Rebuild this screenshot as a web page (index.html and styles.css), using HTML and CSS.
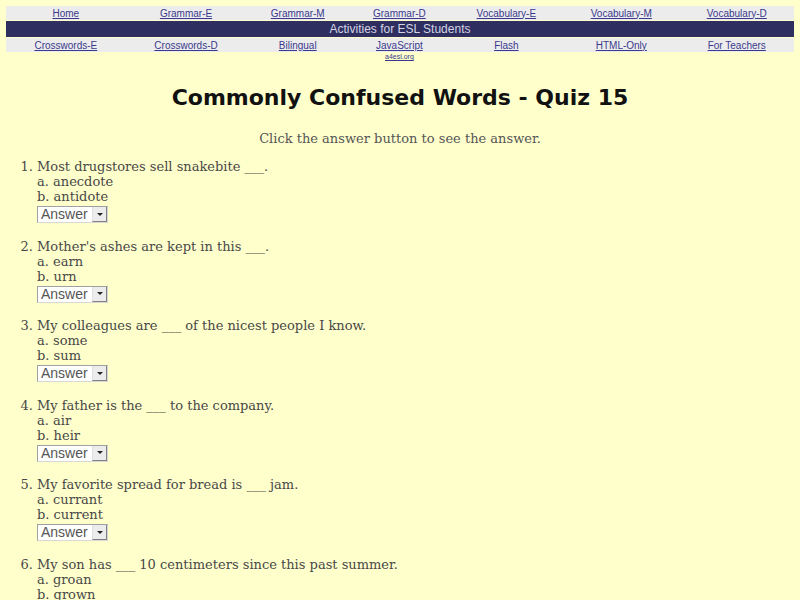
FILE: index.html
```html
<!DOCTYPE html>
<html>
<head>
<meta charset="utf-8">
<title>Commonly Confused Words - Quiz 15</title>
<link rel="stylesheet" href="styles.css">
</head>
<body>
<table class="nav">
  <tr class="links">
    <td><a href="#">Home</a></td>
    <td><a href="#">Grammar-E</a></td>
    <td><a href="#">Grammar-M</a></td>
    <td><a href="#">Grammar-D</a></td>
    <td><a href="#">Vocabulary-E</a></td>
    <td><a href="#">Vocabulary-M</a></td>
    <td><a href="#">Vocabulary-D</a></td>
  </tr>
  <tr class="banner">
    <td colspan="7">Activities for ESL Students</td>
  </tr>
  <tr class="links">
    <td><a href="#">Crosswords-E</a></td>
    <td><a href="#">Crosswords-D</a></td>
    <td><a href="#">Bilingual</a></td>
    <td><a href="#">JavaScript</a></td>
    <td><a href="#">Flash</a></td>
    <td><a href="#">HTML-Only</a></td>
    <td><a href="#">For Teachers</a></td>
  </tr>
  <tr class="site">
    <td></td><td></td><td></td>
    <td><a href="#">a4esl.org</a></td>
    <td></td><td></td><td></td>
  </tr>
</table>

<h1 class="title">Commonly Confused Words - Quiz 15</h1>
<p class="intro">Click the answer button to see the answer.</p>

<ol class="quiz">
  <li>
    <div>Most drugstores sell snakebite ___.</div>
    <div>a. anecdote</div>
    <div>b. antidote</div>
    <div class="select"><span class="value">Answer</span><span class="btn"><span class="arrow"></span></span></div>
  </li>
  <li>
    <div>Mother's ashes are kept in this ___.</div>
    <div>a. earn</div>
    <div>b. urn</div>
    <div class="select"><span class="value">Answer</span><span class="btn"><span class="arrow"></span></span></div>
  </li>
  <li>
    <div>My colleagues are ___ of the nicest people I know.</div>
    <div>a. some</div>
    <div>b. sum</div>
    <div class="select"><span class="value">Answer</span><span class="btn"><span class="arrow"></span></span></div>
  </li>
  <li>
    <div>My father is the ___ to the company.</div>
    <div>a. air</div>
    <div>b. heir</div>
    <div class="select"><span class="value">Answer</span><span class="btn"><span class="arrow"></span></span></div>
  </li>
  <li>
    <div>My favorite spread for bread is ___ jam.</div>
    <div>a. currant</div>
    <div>b. current</div>
    <div class="select"><span class="value">Answer</span><span class="btn"><span class="arrow"></span></span></div>
  </li>
  <li>
    <div>My son has ___ 10 centimeters since this past summer.</div>
    <div>a. groan</div>
    <div>b. grown</div>
    <div class="select"><span class="value">Answer</span><span class="btn"><span class="arrow"></span></span></div>
  </li>
</ol>
</body>
</html>
```
FILE: styles.css
```css
html, body {
  background: #ffffcc;
}
body {
  margin: 0;
  padding: 6px;
  font-family: "DejaVu Serif", serif;
  color: #484848;
}
.nav {
  width: 100%;
  border-collapse: collapse;
  font-family: "Liberation Sans", Arial, sans-serif;
  font-size: 10px;
}
.nav td {
  text-align: center;
  padding: 0;
}
.nav a {
  color: #3a3a8c;
  text-decoration: underline;
}
.links td {
  background: #ececec;
  height: 14px;
}
.banner td {
  background: #2e2e60;
  color: #d4d4e4;
  font-size: 12px;
  height: 16px;
  border-top: 1px solid #ffffcc;
  border-bottom: 1px solid #ffffcc;
}
.site td {
  font-size: 7px;
  height: 10px;
  vertical-align: top;
  padding-top: 1px;
}
.site a {
  color: #3a3a8c;
}
.title {
  font-family: "DejaVu Sans", sans-serif;
  font-weight: bold;
  font-size: 22px;
  text-align: center;
  color: #111;
  margin: 20px 0 0;
  line-height: 30px;
}
.intro {
  text-align: center;
  font-size: 13px;
  color: #555;
  margin: 18px 0 0;
  line-height: 16px;
}
.quiz {
  margin: 12px 0 0;
  padding-left: 31px;
  font-size: 13px;
  line-height: 15px;
}
.quiz li {
  margin-bottom: 15.6px;
  padding-left: 0;
}
.select {
  display: inline-flex;
  align-items: stretch;
  margin-top: 2px;
  width: 71px;
  height: 17px;
  box-sizing: border-box;
  background: #fff;
  border: 1px solid #a0a0a0;
  border-right-color: #d8d8d8;
  border-bottom-color: #d8d8d8;
  font-family: "Liberation Sans", Arial, sans-serif;
  font-size: 14px;
  line-height: 15px;
  color: #555;
}
.value {
  flex: 1;
  padding-left: 3px;
}
.btn {
  width: 13px;
  background: #ececec;
  border-left: 1px solid #e0e0e0;
  border-right: 1px solid #808080;
  border-bottom: 1px solid #808080;
  display: flex;
  align-items: center;
  justify-content: center;
}
.arrow {
  width: 0;
  height: 0;
  border-left: 3px solid transparent;
  border-right: 3px solid transparent;
  border-top: 3px solid #222;
}
```
